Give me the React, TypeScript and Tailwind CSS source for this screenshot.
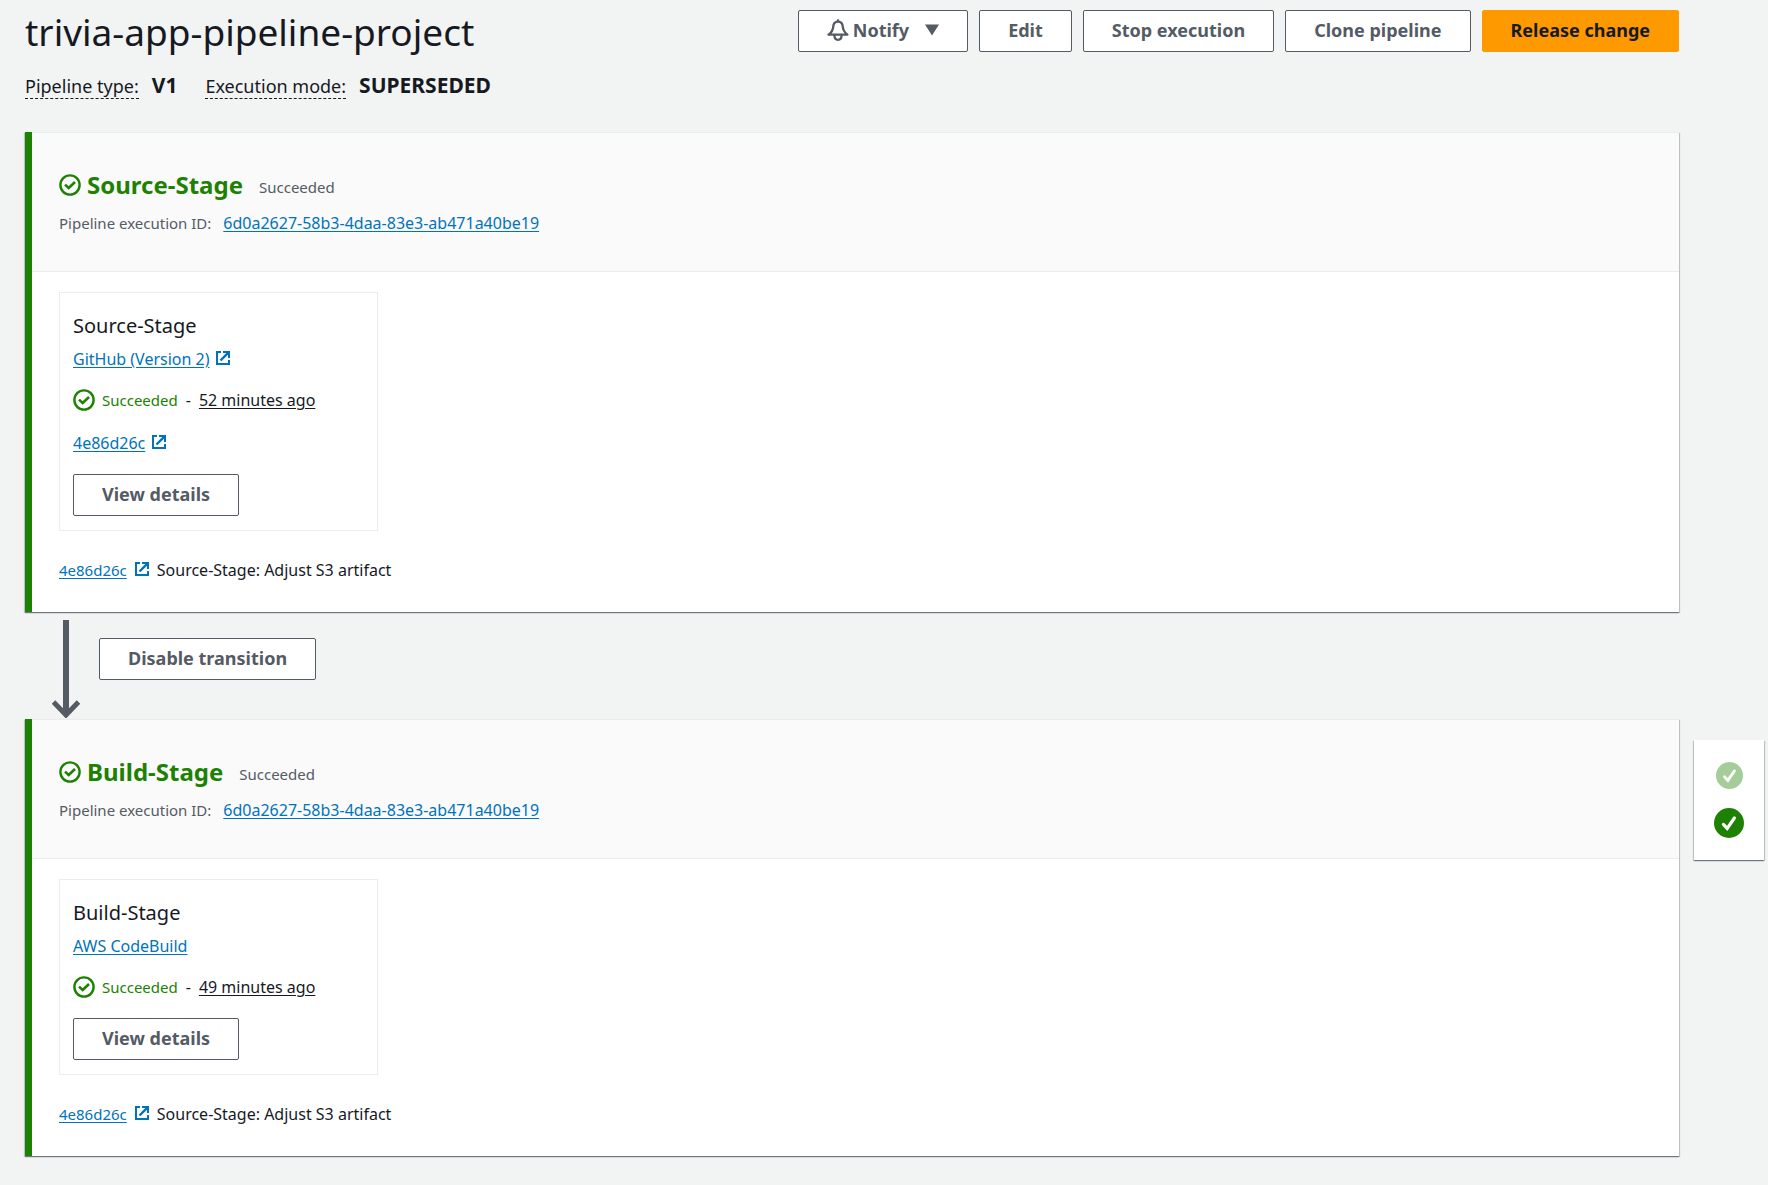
import type { ReactNode } from "react";

const EXECUTION_ID = "6d0a2627-58b3-4daa-83e3-ab471a40be19";

function CheckRing() {
  return (
    <svg viewBox="0 0 22 22" className="size-[22px] shrink-0" fill="none" stroke="currentColor" aria-hidden="true">
      <circle cx="11" cy="11" r="9.6" strokeWidth="2.4" />
      <path d="M6 10.6 L9.7 14 L16 8" strokeWidth="2.6" />
    </svg>
  );
}

function ExternalIcon() {
  return (
    <svg viewBox="0 0 14 14" className="mb-0.5 size-3.5 shrink-0 text-[#0073bb]" fill="none" stroke="currentColor" strokeWidth="2" aria-hidden="true">
      <path d="M5 1 H1 V13 H13 V9" />
      <path d="M7 1 H13 V7" />
      <path d="M4.5 9.5 L12.6 1.4" strokeWidth="2.4" />
    </svg>
  );
}

function BellIcon() {
  return (
    <svg viewBox="0 0 22 22" className="size-[22px] shrink-0" fill="none" stroke="currentColor" strokeWidth="2.3" strokeLinejoin="round" aria-hidden="true">
      <path d="M11 0.4 V3" />
      <path d="M11 2.6 C8 2.6 6.4 4.8 6.2 7.8 C6 11.8 4.4 13.4 1.6 15.7 H20.4 C17.6 13.4 16 11.8 15.8 7.8 C15.6 4.8 14 2.6 11 2.6 Z" />
      <path d="M7.4 16 C7.4 19 9 20.8 11 20.8 C13 20.8 14.6 19 14.6 16" />
    </svg>
  );
}

function SolidCheck({ className }: { className: string }) {
  return (
    <svg viewBox="0 0 30 30" className={className} aria-hidden="true">
      <circle cx="15" cy="15" r="15" fill="currentColor" />
      <path d="M9.4 16.4 L13.2 20.4 L20.4 10" fill="none" stroke="#fff" strokeWidth="3.2" strokeLinecap="round" strokeLinejoin="miter" />
    </svg>
  );
}

function Button({ children, primary = false }: { children: ReactNode; primary?: boolean }) {
  return (
    <button
      type="button"
      className={
        primary
          ? "flex h-[42px] items-center rounded-xs border border-[#ff9900] bg-[#ff9900] px-7 pb-[3px] text-lg font-bold whitespace-nowrap text-[#16191f]"
          : "flex h-[42px] items-center rounded-xs border border-[#545b64] bg-white px-7 pb-[3px] text-lg font-bold whitespace-nowrap text-[#545b64]"
      }
    >
      {children}
    </button>
  );
}

function TextLink({ children }: { children: ReactNode }) {
  return (
    <a href="#" className="text-[#0073bb] underline underline-offset-2">
      {children}
    </a>
  );
}

function Stage({
  name,
  provider,
  external = false,
  time,
  commit,
}: {
  name: string;
  provider: string;
  external?: boolean;
  time: string;
  commit?: string;
}) {
  return (
    <section className="border-l-[7px] border-[#1d8102] bg-white shadow-[0_1px_1px_0_rgba(0,28,36,0.35),1px_1px_1px_0_rgba(0,28,36,0.18),-1px_1px_1px_0_rgba(0,28,36,0.18)]">
      <header className="border-y border-[#eaeded] bg-[#fafafa] px-[27px] py-9">
        <div className="flex h-8 items-center">
          <span className="text-[#1d8102]">
            <CheckRing />
          </span>
          <h2 className="ml-1.5 text-2xl leading-8 font-bold text-[#1d8102]">{name}</h2>
          <span className="mt-1 ml-4 text-[15px] leading-6 text-[#545b64]">Succeeded</span>
        </div>
        <p className="mt-2.5 flex items-baseline gap-3 text-[15px] leading-6 text-[#545b64]">
          Pipeline execution ID:
          <span className="text-base leading-6">
            <TextLink>{EXECUTION_ID}</TextLink>
          </span>
        </p>
      </header>
      <div className="px-[27px] pt-5 pb-[30px] text-base leading-6">
        <article className="w-[319px] border border-[#eaeded] px-[13px] pt-[19px] pb-3.5">
          <h3 className="text-xl leading-7 text-[#16191f]">{name}</h3>
          <p className="mt-[7px] flex items-center gap-[7px]">
            <TextLink>{provider}</TextLink>
            {external && <ExternalIcon />}
          </p>
          <p className="mt-[17px] flex items-center text-[#16191f]">
            <span className="flex items-center gap-[7px] text-[#1d8102]">
              <CheckRing />
              <span className="text-[15px]">Succeeded</span>
            </span>
            <span className="mx-2">-</span>
            <span className="underline underline-offset-2">{time}</span>
          </p>
          {commit && (
            <p className="mt-[19px] flex items-center gap-[7px]">
              <TextLink>{commit}</TextLink>
              <ExternalIcon />
            </p>
          )}
          <div className="mt-[19px] flex">
            <Button>View details</Button>
          </div>
        </article>
        <p className="mt-[27px] flex items-center gap-2 text-[#16191f]">
          <span className="text-[15px]">
            <TextLink>4e86d26c</TextLink>
          </span>
          <ExternalIcon />
          <span>Source-Stage: Adjust S3 artifact</span>
        </p>
      </div>
    </section>
  );
}

export default function App() {
  return (
    <div className="flex min-h-screen gap-[15px] bg-[#f2f3f3] pr-1 pb-7 pl-[25px] font-['Noto_Sans',sans-serif] text-[#16191f]">
      <main className="min-w-0 flex-1">
        <div className="flex items-start justify-between pt-2.5">
          <h1 className="text-[37px] leading-[44px]">trivia-app-pipeline-project</h1>
          <div className="flex gap-[11px]">
            <Button>
              <BellIcon />
              <span className="ml-1">Notify</span>
              <svg viewBox="0 0 14 12" className="ml-4 h-3 w-3.5" fill="currentColor" aria-hidden="true">
                <path d="M0 0.5 H14 L7 11.5 Z" />
              </svg>
            </Button>
            <Button>Edit</Button>
            <Button>Stop execution</Button>
            <Button>Clone pipeline</Button>
            <Button primary>Release change</Button>
          </div>
        </div>
        <dl className="mt-[19px] mb-[35px] flex h-6 items-baseline text-lg leading-6">
          <dt className="border-b border-dashed border-[#16191f]">Pipeline type:</dt>
          <dd className="ml-[13px] text-[21px] leading-6 font-bold">V1</dd>
          <dt className="ml-7 border-b border-dashed border-[#16191f]">Execution mode:</dt>
          <dd className="ml-[13px] text-[21px] leading-6 font-bold">SUPERSEDED</dd>
        </dl>
        <Stage name="Source-Stage" provider="GitHub (Version 2)" external time="52 minutes ago" commit="4e86d26c" />
        <div className="flex h-[107px] items-start pl-[27px]">
          <svg viewBox="0 0 28 98" className="mt-2 h-[98px] w-7 text-[#545b64]" fill="none" stroke="currentColor" aria-hidden="true">
            <path d="M14 0 V94" strokeWidth="6" />
            <path d="M1.5 82 L14 95 L26.5 82" strokeWidth="5" />
          </svg>
          <div className="mt-[26px] ml-[19px]">
            <Button>Disable transition</Button>
          </div>
        </div>
        <Stage name="Build-Stage" provider="AWS CodeBuild" time="49 minutes ago" />
      </main>
      <nav aria-label="Stages" className="mt-[740px] flex h-[120px] w-[70px] shrink-0 flex-col items-center gap-[19px] bg-white pt-[22px] shadow-[0_1px_1px_0_rgba(0,28,36,0.35),1px_1px_1px_0_rgba(0,28,36,0.18),-1px_1px_1px_0_rgba(0,28,36,0.18)]">
        <a href="#" aria-label="Source-Stage" className="text-[#a5cd9a]">
          <SolidCheck className="size-[27px]" />
        </a>
        <a href="#" aria-label="Build-Stage" className="text-[#1d8102]">
          <SolidCheck className="size-[30px]" />
        </a>
      </nav>
    </div>
  );
}
